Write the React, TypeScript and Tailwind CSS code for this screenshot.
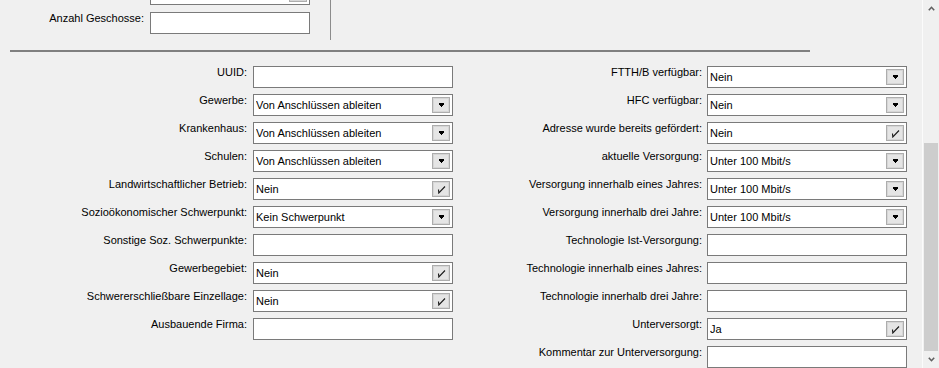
import React from "react";

type Kind = "text" | "combo" | "check";
type Field = { label: string; kind: Kind; value?: string };

const ABL = "Von Anschlüssen ableiten";
const U100 = "Unter 100 Mbit/s";

const leftFields: Field[] = [
  { label: "UUID:", kind: "text" },
  { label: "Gewerbe:", kind: "combo", value: ABL },
  { label: "Krankenhaus:", kind: "combo", value: ABL },
  { label: "Schulen:", kind: "combo", value: ABL },
  { label: "Landwirtschaftlicher Betrieb:", kind: "check", value: "Nein" },
  { label: "Sozioökonomischer Schwerpunkt:", kind: "combo", value: "Kein Schwerpunkt" },
  { label: "Sonstige Soz. Schwerpunkte:", kind: "text" },
  { label: "Gewerbegebiet:", kind: "check", value: "Nein" },
  { label: "Schwererschließbare Einzellage:", kind: "check", value: "Nein" },
  { label: "Ausbauende Firma:", kind: "text" },
];

const rightFields: Field[] = [
  { label: "FTTH/B verfügbar:", kind: "combo", value: "Nein" },
  { label: "HFC verfügbar:", kind: "combo", value: "Nein" },
  { label: "Adresse wurde bereits gefördert:", kind: "check", value: "Nein" },
  { label: "aktuelle Versorgung:", kind: "combo", value: U100 },
  { label: "Versorgung innerhalb eines Jahres:", kind: "combo", value: U100 },
  { label: "Versorgung innerhalb drei Jahre:", kind: "combo", value: U100 },
  { label: "Technologie Ist-Versorgung:", kind: "text" },
  { label: "Technologie innerhalb eines Jahres:", kind: "text" },
  { label: "Technologie innerhalb drei Jahre:", kind: "text" },
  { label: "Unterversorgt:", kind: "check", value: "Ja" },
  { label: "Kommentar zur Unterversorgung:", kind: "text" },
];

const DropGlyph = () => (
  <svg width="5" height="4" viewBox="0 0 5 4" shapeRendering="crispEdges">
    <rect x="0" y="0" width="5" height="2" fill="#000" />
    <rect x="1" y="2" width="3" height="1" fill="#000" />
    <rect x="2" y="3" width="1" height="1" fill="#000" />
  </svg>
);

const CheckGlyph = () => (
  <svg width="9" height="9" viewBox="0 0 9 9">
    <polyline points="1.5,4.5 1.8,8 8,1.5" fill="none" stroke="#1a1a1a" strokeWidth="1.1" />
  </svg>
);

const FieldButton = ({ kind }: { kind: Kind }) => (
  <div className="mr-[2px] w-[18px] h-[16px] border border-[#adadad] bg-[#e5e5e5] shadow-[inset_0_0_0_1px_#d6d6d6] flex items-center justify-center shrink-0">
    {kind === "combo" ? <DropGlyph /> : <CheckGlyph />}
  </div>
);

const Box = ({ field, width }: { field: Field; width: string }) => (
  <div className={`${width} h-[22px] border border-[#7a7a7a] bg-white flex items-center pl-[2px] shrink-0`}>
    <span className="flex-1 leading-[13px] text-black truncate">{field.value ?? ""}</span>
    {field.kind !== "text" && <FieldButton kind={field.kind} />}
  </div>
);

const Row = ({ field, labelW, gap }: { field: Field; labelW: string; gap: string }) => (
  <div className="flex items-start h-[22px]">
    <div className={`${labelW} text-right leading-[13px] whitespace-nowrap text-black`}>{field.label}</div>
    <div className={gap}>
      <Box field={field} width="w-[200px]" />
    </div>
  </div>
);

const Chevron = ({ up }: { up?: boolean }) => (
  <svg width="7" height="5" viewBox="0 0 7 5" className={up ? "" : "rotate-180"}>
    <polyline points="0.8,4.2 3.5,1.3 6.2,4.2" fill="none" stroke="#606060" strokeWidth="1.6" />
  </svg>
);

export default function App() {
  return (
    <div
      className="w-[939px] h-[368px] bg-[#f0f0f0] flex overflow-hidden text-[11px]"
      style={{ fontFamily: '"Liberation Sans", Arial, sans-serif' }}
    >
      {/* form area */}
      <div className="w-[922px] flex flex-col">
        {/* upper section, mostly scrolled away */}
        <div className="flex h-[40px] shrink-0">
          <div className="w-[330px] flex flex-col">
            <div className="ml-[150px] -mt-[17px]">
              <Box field={{ label: "", kind: "combo", value: "" }} width="w-[160px]" />
            </div>
            <div className="flex items-start mt-[7px]">
              <div className="w-[144px] text-right leading-[13px] text-black">Anzahl Geschosse:</div>
              <div className="ml-[6px] w-[160px] h-[22px] border border-[#7a7a7a] bg-white" />
            </div>
          </div>
          <div className="w-px h-[40px] bg-[#8c8c8c]" />
        </div>

        <div className="mt-[10px] ml-[10px] w-[800px] h-[2px] bg-[#808080] shrink-0" />

        <div className="flex mt-[14px]">
          <div className="w-[453px] flex flex-col gap-[6px]">
            {leftFields.map((f) => (
              <Row key={f.label} field={f} labelW="w-[247px]" gap="ml-[6px]" />
            ))}
          </div>
          <div className="flex flex-col gap-[6px]">
            {rightFields.map((f) => (
              <Row key={f.label} field={f} labelW="w-[249px]" gap="ml-[5px]" />
            ))}
          </div>
        </div>
      </div>

      {/* vertical scrollbar */}
      <div className="w-[17px] h-full flex flex-col border-l border-[#fbfbfb] bg-[#f0f0f0]">
        <div className="h-[17px] flex items-center justify-center shrink-0">
          <Chevron up />
        </div>
        <div className="flex-1 flex flex-col pt-[126px]">
          <div className="flex-1 mx-[1px] bg-[#cdcdcd]" />
        </div>
        <div className="h-[17px] flex items-center justify-center shrink-0">
          <Chevron />
        </div>
      </div>
    </div>
  );
}
